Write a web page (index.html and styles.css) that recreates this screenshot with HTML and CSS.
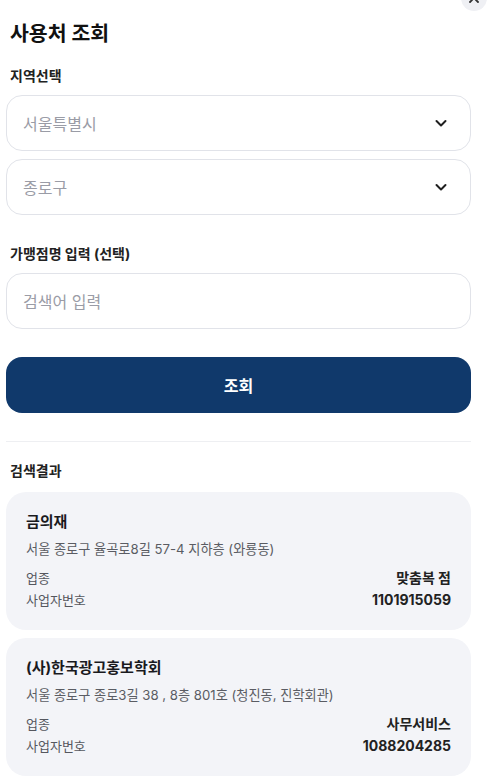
FILE: index.html
```html
<!DOCTYPE html>
<html lang="ko">
<head>
<meta charset="utf-8">
<title>사용처 조회</title>
<link rel="stylesheet" href="styles.css">
</head>
<body>
<div class="page">
  <button class="close" aria-label="닫기">
    <svg width="12" height="12" viewBox="0 0 12 12"><path d="M2 2L10 10M10 2L2 10" stroke="#333" stroke-width="1.8" stroke-linecap="round"/></svg>
  </button>
  <h1 class="title">사용처 조회</h1>

  <div class="label first">지역선택</div>
  <div class="field select">
    <span class="ph">서울특별시</span>
    <svg class="chev" width="14" height="14" viewBox="0 0 14 14"><path d="M2.5 5L7 9.5L11.5 5" fill="none" stroke="#1f1f1f" stroke-width="2" stroke-linecap="round" stroke-linejoin="round"/></svg>
  </div>
  <div class="field select gap">
    <span class="ph">종로구</span>
    <svg class="chev" width="14" height="14" viewBox="0 0 14 14"><path d="M2.5 5L7 9.5L11.5 5" fill="none" stroke="#1f1f1f" stroke-width="2" stroke-linecap="round" stroke-linejoin="round"/></svg>
  </div>

  <div class="label second">가맹점명 입력 (선택)</div>
  <div class="field">
    <span class="ph">검색어 입력</span>
  </div>

  <button class="search">조회</button>

  <hr class="divider">

  <div class="label result">검색결과</div>

  <div class="card">
    <div class="name">금의재</div>
    <div class="addr">서울 종로구 율곡로8길 57-4 지하층 (와룡동)</div>
    <div class="row first-row"><span class="k">업종</span><span class="v">맞춤복 점</span></div>
    <div class="row"><span class="k">사업자번호</span><span class="v">1101915059</span></div>
  </div>

  <div class="card">
    <div class="name">(사)한국광고홍보학회</div>
    <div class="addr">서울 종로구 종로3길 38 , 8층 801호 (청진동, 진학회관)</div>
    <div class="row first-row"><span class="k">업종</span><span class="v">사무서비스</span></div>
    <div class="row"><span class="k">사업자번호</span><span class="v">1088204285</span></div>
  </div>
</div>
</body>
</html>
```
FILE: styles.css
```css
* { box-sizing: border-box; }
html, body { margin: 0; padding: 0; background: #fff; }
body {
  font-family: Inter, "Noto Sans CJK KR", sans-serif;
  color: #1b1b1f;
  overflow: hidden;
}
.page {
  position: relative;
  padding: 20px 18px 0 6px;
  display: flex;
  flex-direction: column;
}
.close {
  position: absolute;
  top: -15px;
  right: 2px;
  width: 26px;
  height: 26px;
  border-radius: 50%;
  border: 0;
  background: #eff0f4;
  display: flex;
  align-items: center;
  justify-content: center;
  padding: 0;
}
.title {
  margin: 0 0 0 4px;
  font-size: 20.5px;
  line-height: 28px;
  font-weight: 700;
  color: #111;
}
.label {
  margin-left: 4px;
  font-size: 14px;
  line-height: 18px;
  font-weight: 700;
  color: #222;
}
.label.first { margin-top: 19px; margin-bottom: 10px; }
.label.second { margin-top: 30px; margin-bottom: 10px; }
.label.result { margin-top: 20px; margin-bottom: 12px; }
.field {
  height: 56px;
  border: 1px solid #e1e3e9;
  border-radius: 16px;
  background: #fff;
  display: flex;
  align-items: center;
  justify-content: space-between;
  padding: 0 22px 0 16px;
}
.field.gap { margin-top: 8px; }
.ph {
  font-size: 16px;
  color: #9a9ca6;
}
.chev { flex: none; }
.search {
  margin-top: 28px;
  height: 56px;
  border: 0;
  border-radius: 16px;
  background: #10396b;
  color: #fff;
  font-family: inherit;
  font-size: 16px;
  font-weight: 700;
}
.divider {
  margin: 28px 0 0;
  border: 0;
  height: 1px;
  background: #eeeff2;
}
.card {
  background: #f3f4f8;
  border-radius: 20px;
  padding: 20px 20px 21px;
  margin-bottom: 8px;
  display: flex;
  flex-direction: column;
}
.name {
  font-size: 15px;
  line-height: 20px;
  font-weight: 700;
  color: #1a1a1e;
}
.addr {
  margin-top: 8px;
  font-size: 13.2px;
  line-height: 18px;
  color: #5a5c63;
}
.row {
  display: flex;
  justify-content: space-between;
  align-items: center;
  margin-top: 4px;
  line-height: 18px;
}
.row.first-row { margin-top: 11px; }
.k { font-size: 13px; color: #55575e; }
.v { font-size: 14px; font-weight: 700; color: #222; }
```
